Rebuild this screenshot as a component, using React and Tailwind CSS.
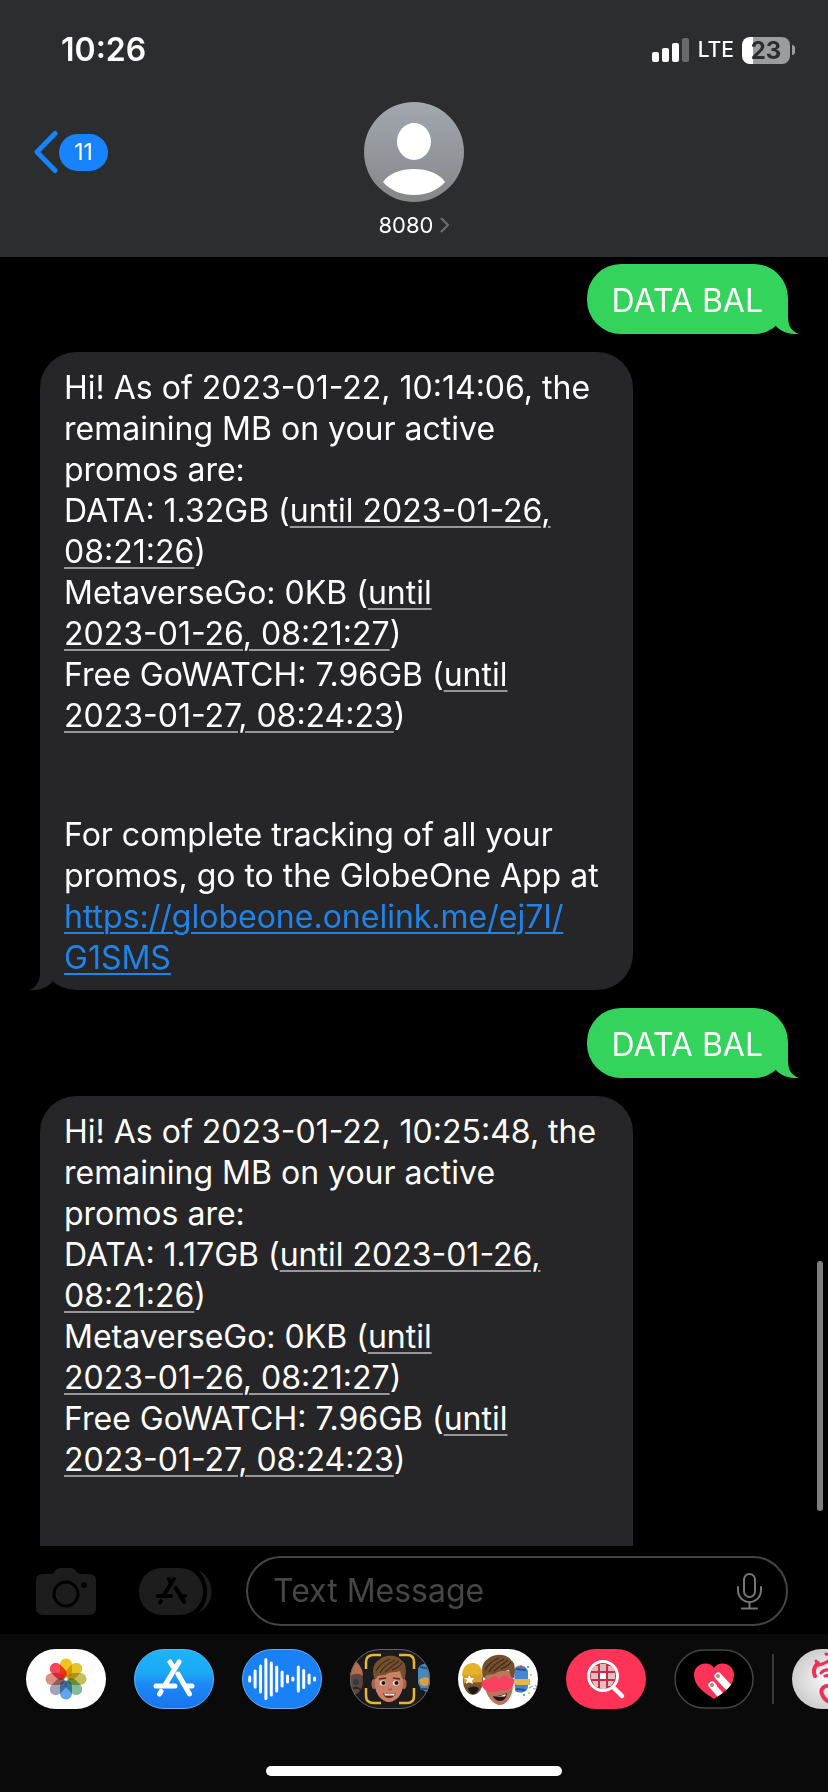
import React from 'react';

const promoText = 'whitespace-nowrap text-[32px] leading-[41px]';

// Underlined date that iOS detects inside a message
const DateLink = ({ children }) => (
    <a href="#date" className="underline decoration-[#98989a] decoration-2 underline-offset-4">{children}</a>
);

const TailRight = () => (
    <svg className="absolute bottom-0 -right-[11px] w-6 h-9" viewBox="0 0 24 36" fill="#33d35c" aria-hidden="true">
        <path d="M13 0V19C13 28 17 33.500 24 36C14 36.500 6 34 1 28L0 0Z" />
    </svg>
);

const TailLeft = () => (
    <svg className="absolute bottom-0 -left-[11px] w-6 h-9" viewBox="0 0 24 36" fill="#262628" aria-hidden="true">
        <path d="M11 0V19C11 28 7 33.500 0 36C10 36.500 18 34 23 28L24 0Z" />
    </svg>
);

const SentBubble = ({ children }) => (
    <div className="relative self-end bg-[#33d35c] rounded-[34px] px-[25px] pt-4 pb-3 mr-10">
        <TailRight />
        <p className="relative whitespace-nowrap text-[32px] leading-[42px]">{children}</p>
    </div>
);

const BalanceText = ({ time, data }) => (
    <p className={promoText}>
        Hi! As of 2023-01-22, {time}, the<br />
        remaining MB on your active<br />
        promos are:<br />
        DATA: {data} (<DateLink>until 2023-01-26,<br />08:21:26</DateLink>)<br />
        MetaverseGo: 0KB (<DateLink>until<br />2023-01-26, 08:21:27</DateLink>)<br />
        Free GoWATCH: 7.96GB (<DateLink>until<br />2023-01-27, 08:24:23</DateLink>)
    </p>
);

const StatusBar = () => (
    <div className="flex items-center justify-between h-[100px] pl-[61px] pr-[33px]">
        <span className="text-[32px] leading-10 font-semibold">10:26</span>
        <div className="flex items-center gap-2">
            <svg className="w-[38px] h-6" viewBox="0 0 38 24" aria-hidden="true">
                <rect x="0" y="14" width="7" height="10" rx="2" fill="#fff" />
                <rect x="10" y="10" width="7" height="14" rx="2" fill="#fff" />
                <rect x="20" y="5" width="7" height="19" rx="2" fill="#fff" />
                <rect x="30" y="0" width="7" height="24" rx="2" fill="#68696b" />
            </svg>
            <span className="text-[21px] leading-7 font-medium">LTE</span>
            <div className="flex items-center gap-[2px]">
                <div className="flex items-center justify-center w-12 h-[27px] rounded-lg bg-linear-to-r from-white from-23% to-[#9a9d9f] to-23% text-[#2c2d2f] text-[24px] leading-[27px] font-bold">
                    23
                </div>
                <div className="w-[3px] h-[10px] rounded-r-full bg-[#9a9d9f]" />
            </div>
        </div>
    </div>
);

const Header = () => (
    <header className="shrink-0 bg-[#2c2d2f]">
        <StatusBar />
        <div className="grid grid-cols-[1fr_auto_1fr] items-start pt-[2px] pb-[18px]">
            <button className="flex items-center gap-[1px] h-[100px] pl-[33px]" aria-label="Back, 11 unread">
                <svg className="w-[25px] h-[44px]" viewBox="0 0 25 44" fill="none" stroke="#1784fe" strokeWidth="5" strokeLinecap="round" strokeLinejoin="round">
                    <path d="M22 3.500L4 22L22 40.500" />
                </svg>
                <span className="w-[49px] h-[37px] rounded-full bg-[#1784fe] text-[23px] leading-[37px] text-center">11</span>
            </button>
            <button className="flex flex-col items-center gap-[9px]">
                <svg className="w-[100px] h-[100px]" viewBox="0 0 100 100" aria-hidden="true">
                    <defs>
                        <linearGradient id="avatar" x1="0" y1="0" x2="0" y2="1">
                            <stop offset="0" stopColor="#a2a8af" />
                            <stop offset="1" stopColor="#858689" />
                        </linearGradient>
                    </defs>
                    <circle cx="50" cy="50" r="50" fill="url(#avatar)" />
                    <ellipse cx="50" cy="39.500" rx="17" ry="18.500" fill="#fff" />
                    <path d="M19 80C25 71 37 67 50 67C63 67 75 71 81 80C73 89 62 93 50 93C38 93 27 89 19 80Z" fill="#fff" />
                </svg>
                <span className="flex items-center gap-[7px] text-[22px] leading-7">
                    8080
                    <svg className="w-[9px] h-4" viewBox="0 0 9 16" fill="none" stroke="#6d6e71" strokeWidth="2">
                        <path d="M1 1L8 8L1 15" />
                    </svg>
                </span>
            </button>
        </div>
    </header>
);

const Thread = () => (
    <main className="relative flex-1 min-h-0 overflow-hidden flex flex-col pt-[7px] gap-[18px]">
        <SentBubble>DATA BAL</SentBubble>

        <div className="relative ml-10 w-full max-w-[593px] rounded-[36px] bg-[#262628] px-6 pt-[15px] pb-3">
            <TailLeft />
            <div className="relative">
                <BalanceText time="10:14:06" data="1.32GB" />
                <p className={`${promoText} mt-[78px]`}>
                    For complete tracking of all your<br />
                    promos, go to the GlobeOne App at<br />
                    <a href="https://globeone.onelink.me/ej7I/G1SMS" className="text-[#1f84ea] underline decoration-2 underline-offset-4">
                        https://globeone.onelink.me/ej7I/<br />G1SMS
                    </a>
                </p>
            </div>
        </div>

        <SentBubble>DATA BAL</SentBubble>

        <div className="flex-1 ml-10 w-full max-w-[593px] rounded-t-[36px] bg-[#262628] px-6 pt-[15px]">
            <BalanceText time="10:25:48" data="1.17GB" />
        </div>

        <div className="absolute right-[5px] bottom-[35px] w-[6px] h-[250px] rounded-full bg-[#7e7e80]" />
    </main>
);

const Composer = () => (
    <form className="flex items-center pl-9 pr-10 pt-[10px] pb-2 bg-black" onSubmit={(e) => e.preventDefault()}>
        <button type="button" aria-label="Camera">
            <svg className="w-[60px] h-[47px]" viewBox="0 0 60 47">
                <path d="M7 6H15Q17 6 19 3Q21 0 24 0H35Q38 0 40 3Q42 6 44 6H53Q60 6 60 13V40Q60 47 53 47H7Q0 47 0 40V13Q0 6 7 6Z" fill="#1d1d1e" />
                <circle cx="30" cy="26" r="12" fill="none" stroke="#000" strokeWidth="3" />
                <circle cx="48" cy="17" r="3" fill="#000" />
            </svg>
        </button>
        <button type="button" aria-label="Apps" className="ml-[43px]">
            <svg className="w-[74px] h-[47px]" viewBox="0 0 74 47">
                <rect width="64" height="47" rx="23" fill="#1d1d1e" />
                <path d="M59 2C77 10 77 37 59 45C71 34 71 13 59 2Z" fill="#1d1d1e" />
                <g stroke="#000" strokeWidth="4" strokeLinecap="round">
                    <path d="M35 11L24 28M30 11L31.500 14M37 20L45 34M19 28H32M41 28H46M22 33L21 34.500" />
                </g>
            </svg>
        </button>
        <div className="flex-1 min-w-0 flex items-center ml-[33px] h-[70px] rounded-full border-2 border-[#454547] pl-[25px] pr-6">
            <input
                type="text"
                aria-label="Text Message"
                placeholder="Text Message"
                className="flex-1 min-w-0 bg-transparent outline-none text-[32px] leading-10 placeholder:text-[#464648]"
            />
            <button type="button" aria-label="Dictate">
                <svg className="w-[25px] h-[37px]" viewBox="0 0 25 37" fill="none" stroke="#767678" strokeWidth="2" strokeLinecap="round">
                    <rect x="7" y="1" width="11" height="23" rx="5.500" />
                    <path d="M1 14V17C1 24 6 29 12.500 29C19 29 24 24 24 17V14M12.500 29V35M5 35.500H20" />
                </svg>
            </button>
        </div>
    </form>
);

const petals = [
    { angle: 0, color: '#f1c21f' },
    { angle: 45, color: '#e6c32d' },
    { angle: 90, color: '#c3bf5e' },
    { angle: 135, color: '#84bb9b' },
    { angle: 180, color: '#62a3ea' },
    { angle: 225, color: '#a3a4b5' },
    { angle: 270, color: '#dd9182' },
    { angle: 315, color: '#f5485d' },
];

const PhotosIcon = () => (
    <>
        <rect width="80" height="60" rx="30" fill="#fff" />
        <g transform="translate(40 30)">
            {petals.map((p) => (
                <rect key={p.angle} x="-6" y="-20.500" width="12" height="19" rx="6" fill={p.color} transform={`rotate(${p.angle})`} style={{ mixBlendMode: 'multiply' }} />
            ))}
        </g>
    </>
);

const StoreIcon = () => (
    <>
        <defs>
            <linearGradient id="store" x1="0" y1="0" x2="0" y2="1">
                <stop offset="0" stopColor="#1cb4f8" />
                <stop offset="0.4" stopColor="#1ca9f7" />
                <stop offset="0.6" stopColor="#1b87f5" />
                <stop offset="1" stopColor="#1a74f0" />
            </linearGradient>
        </defs>
        <rect x="0.5" y="0.5" width="79" height="59" rx="29.500" fill="url(#store)" stroke="#63aef5" />
        <path d="M45 13L31 36M36 13L38.500 17M44 25L55.500 45M22 37H41M51 37H58M27 42.500L25.500 45" stroke="#fff" strokeWidth="5" strokeLinecap="round" />
    </>
);

const waves = [7, 19, 29, 42, 35, 27, 17, 9, 5, 27, 20, 11, 5];

const AudioIcon = () => (
    <>
        <rect x="0.5" y="0.5" width="79" height="59" rx="29.500" fill="#1a80f6" stroke="#63aef5" />
        {waves.map((h, i) => (
            <rect key={i} x={6.2 + i * 5.4} y={30 - h / 2} width="3" height={h} rx="1.500" fill="#fff" />
        ))}
    </>
);

const Hair = () => (
    <path d="M-15 -2C-17 -10 -16 -17 -9 -21C-2 -26 9 -25 13 -19C18 -16 17 -8 16 -1L13 -2L11 -9C6 -7 2 -9 -2 -6C-6 -3 -11 -7 -13 -1Z" fill="#76502e" />
);

const HairLines = () => (
    <path d="M-13 -9C-9 -16 -5 -19 1 -21M-9 -7C-6 -13 0 -17 6 -20M-4 -8C1 -12 6 -16 10 -19M3 -10C8 -12 11 -14 13 -17" stroke="#42291b" strokeWidth="1.200" fill="none" />
);

const FaceIcon = () => (
    <>
        <clipPath id="faceClip"><rect width="80" height="60" rx="30" /></clipPath>
        <rect width="80" height="60" rx="30" fill="#1c1b1c" />
        <g clipPath="url(#faceClip)">
            <ellipse cx="3" cy="32" rx="10" ry="14" fill="#5c453b" />
            <path d="M-2 24C2 20 3 15 5 12C10 15 13 21 13 27C8 23 3 25 -2 28Z" fill="#b56f50" />
            <circle cx="6" cy="33" r="3" fill="#333844" />
            <path d="M2 40Q7 37 11 41" stroke="#33241f" strokeWidth="2" fill="none" />
            <path d="M68 20C71 12 80 14 84 22V44C76 45 70 40 68 34Z" fill="#4a87bd" />
            <path d="M69 31Q74 26 80 30V35Q74 39 70 35Z" fill="#d99d43" />
            <path d="M70 18L80 20M70 40L78 40" stroke="#20547f" strokeWidth="2" />
        </g>
        <g transform="translate(39 31)">
            <ellipse cx="-15" cy="4" rx="2.500" ry="5" fill="#a66550" />
            <ellipse cx="15" cy="4" rx="2.500" ry="5" fill="#a66550" />
            <path d="M-14 -9H14V5C14 14 7 22 0 22C-7 22 -14 14 -14 5Z" fill="#ca8066" />
            <Hair />
            <HairLines />
            <ellipse cx="-6" cy="3" rx="3.200" ry="2.600" fill="#f4eee8" />
            <ellipse cx="7" cy="3" rx="3.200" ry="2.600" fill="#f4eee8" />
            <circle cx="-5.500" cy="3" r="2.100" fill="#24150f" />
            <circle cx="7.500" cy="3" r="2.100" fill="#24150f" />
            <path d="M-10 -1L-3 -2M4 -2L11 -1" stroke="#4b2e20" strokeWidth="1.300" />
            <path d="M-1 9Q1 11 3 9" stroke="#92503e" fill="none" />
            <path d="M-6 13Q0 15 7 13Q5 18 0 18Q-5 18 -6 13Z" fill="#61271f" />
            <path d="M-5 13.500Q0 15 6 13.500L5 15.500H-4Z" fill="#fff" />
        </g>
        <path d="M16 20V13Q16 6 24 6H31M49 6H57Q64 6 64 13V20M64 39V47Q64 54 57 54H49M31 54H24Q16 54 16 47V39" fill="none" stroke="#eab82d" strokeWidth="2.500" />
        <rect x="0.5" y="0.5" width="79" height="59" rx="29.500" fill="none" stroke="#656567" />
    </>
);

const MemojiIcon = () => (
    <>
        <rect width="80" height="60" rx="30" fill="#fff" />
        <ellipse cx="15" cy="31" rx="10" ry="15" fill="#7b5232" />
        <path d="M4 27C4 18 9 14 15 14C20 14 23 18 25 24L24 26Z" fill="#e4b32b" />
        <path d="M5 27L24 25V33L6 34Z" fill="#d8a02b" />
        <path d="M11 26L13 29L16 29L14 32L15 35L11 33L8 35L9 31L6 29L10 29Z" fill="#fff" />
        <path d="M10 39Q16 36 21 39Q19 45 15 45Q11 45 10 39Z" fill="#1d1715" />
        <path d="M56 20C60 14 68 16 70 22V38C69 44 62 45 57 42Z" fill="#4488cc" />
        <path d="M55 30H72V36H58Z" fill="#e6b843" />
        <path d="M58 20L68 21M58 40L67 41" stroke="#205496" strokeWidth="2" />
        <circle cx="63" cy="18" r="1.500" fill="#e33d42" />
        <circle cx="70" cy="18" r="1" fill="#2780e8" />
        <circle cx="73" cy="26" r="1" fill="#eab82d" />
        <circle cx="66" cy="46" r="1" fill="#2780e8" />
        <circle cx="71" cy="44" r="1" fill="#eab82d" />
        <path d="M71 39L75 37M75 39A2 2 0 1 0 77 36" stroke="#929292" fill="none" />
        <g transform="translate(41 30)">
            <path d="M-14 -8H14V6C14 16 8 26 1 26C-6 26 -14 16 -14 6Z" fill="#b8765a" />
            <g transform="translate(-1 0)">
                <Hair />
                <HairLines />
            </g>
            <path d="M1 11C-5 15 -14 14 -17 7C-19 2 -13 -1 -9 1C-8 -4 -1 -4 0 1C2 -4 8 -5 10 0C14 -3 17 1 14 6C12 11 5 13 1 11Z" fill="#fb4160" />
            <path d="M-6 17Q1 18 8 14Q7 22 1 22Q-4 22 -6 17Z" fill="#281313" />
            <path d="M-5 17Q1 18 7 15L6 17.500H-3Z" fill="#fff" />
        </g>
    </>
);

const SearchIcon = () => (
    <>
        <rect width="80" height="60" rx="30" fill="#fd3457" />
        <clipPath id="lens"><circle cx="37" cy="27" r="13" /></clipPath>
        <g clipPath="url(#lens)">
            <rect x="23" y="13" width="28" height="28" fill="#c72d4a" />
            <path d="M27 17H32V22H25V20ZM34 15H40V22H34ZM42 17H48L50 22H42Z" fill="#e5b6b4" />
            <path d="M34 24H40V30H34Z" fill="#fff" />
            <path d="M25 24H32V30H25ZM42 24H49V30H42ZM26 32H32V38H29ZM34 32H40V40H34ZM42 32H48L45 37H42Z" fill="#e2c0be" />
        </g>
        <circle cx="37" cy="27" r="14.500" fill="none" stroke="#fff" strokeWidth="3" />
        <path d="M48 39L56 47" stroke="#fff" strokeWidth="4.500" strokeLinecap="round" />
    </>
);

const HeartIcon = () => (
    <>
        <clipPath id="heart"><path d="M40 50C29 43 20 36 20 26C20 14 35 11 40 19C45 11 60 14 60 26C60 36 51 43 40 50Z" /></clipPath>
        <rect x="1" y="1" width="78" height="58" rx="29" fill="#000" stroke="#444446" strokeWidth="1.500" />
        <g clipPath="url(#heart)">
            <rect x="18" y="12" width="44" height="40" fill="#fd3457" />
            <path d="M38 36L50 50M44 27L57 41" stroke="#fff" strokeWidth="7" strokeLinecap="round" />
            <path d="M43 37L53 48" stroke="#fd3457" strokeWidth="1" />
            <circle cx="38" cy="36" r="2" fill="#9e8d78" />
            <circle cx="44" cy="27" r="2" fill="#9e8d78" />
        </g>
    </>
);

const StickerIcon = () => (
    <>
        <defs>
            <radialGradient id="paper">
                <stop offset="0" stopColor="#fff" />
                <stop offset="1" stopColor="#cfcfcf" />
            </radialGradient>
        </defs>
        <rect width="80" height="60" rx="30" fill="url(#paper)" />
        <g fill="none" stroke="#f22f56" strokeLinecap="round">
            <path d="M23 27C21 23 22 18 26 14" strokeWidth="4" />
            <path d="M24 12L27 16C31 15 34 14 38 11" strokeWidth="3" />
            <path d="M34 5L38 6M29 24C31 21 34 20 40 21M33 27L38 26" strokeWidth="3" />
            <path d="M38 37C32 36 28 40 30 45C31 49 34 52 40 54" strokeWidth="4" />
        </g>
    </>
);

const apps = [
    { name: 'Photos', Icon: PhotosIcon },
    { name: 'App Store', Icon: StoreIcon },
    { name: 'Audio', Icon: AudioIcon },
    { name: 'Memoji', Icon: FaceIcon },
    { name: 'Memoji Stickers', Icon: MemojiIcon },
    { name: 'Images', Icon: SearchIcon },
    { name: 'Digital Touch', Icon: HeartIcon },
];

const AppButton = ({ name, Icon }) => (
    <button aria-label={name} className="shrink-0">
        <svg className="w-20 h-[60px]" viewBox="0 0 80 60">
            <Icon />
        </svg>
    </button>
);

const AppDrawer = () => (
    <div className="flex flex-col items-center justify-between h-[158px] pt-[15px] pb-4 bg-[#0a0a0a]">
        <nav className="flex items-center w-full overflow-hidden pl-[26px]">
            <div className="flex gap-7">
                {apps.map((app) => (
                    <AppButton key={app.name} {...app} />
                ))}
            </div>
            <div className="shrink-0 w-[2px] h-[50px] mx-[18px] bg-[#39393b]" />
            <AppButton name="Stickers" Icon={StickerIcon} />
        </nav>
        <div className="w-[296px] h-[10px] rounded-full bg-white" />
    </div>
);

const App = () => {
    return (
        <div className="flex flex-col h-screen overflow-hidden bg-black text-white font-['Inter',sans-serif]">
            <Header />
            <Thread />
            <footer className="shrink-0">
                <Composer />
                <AppDrawer />
            </footer>
        </div>
    );
};

export default App;
